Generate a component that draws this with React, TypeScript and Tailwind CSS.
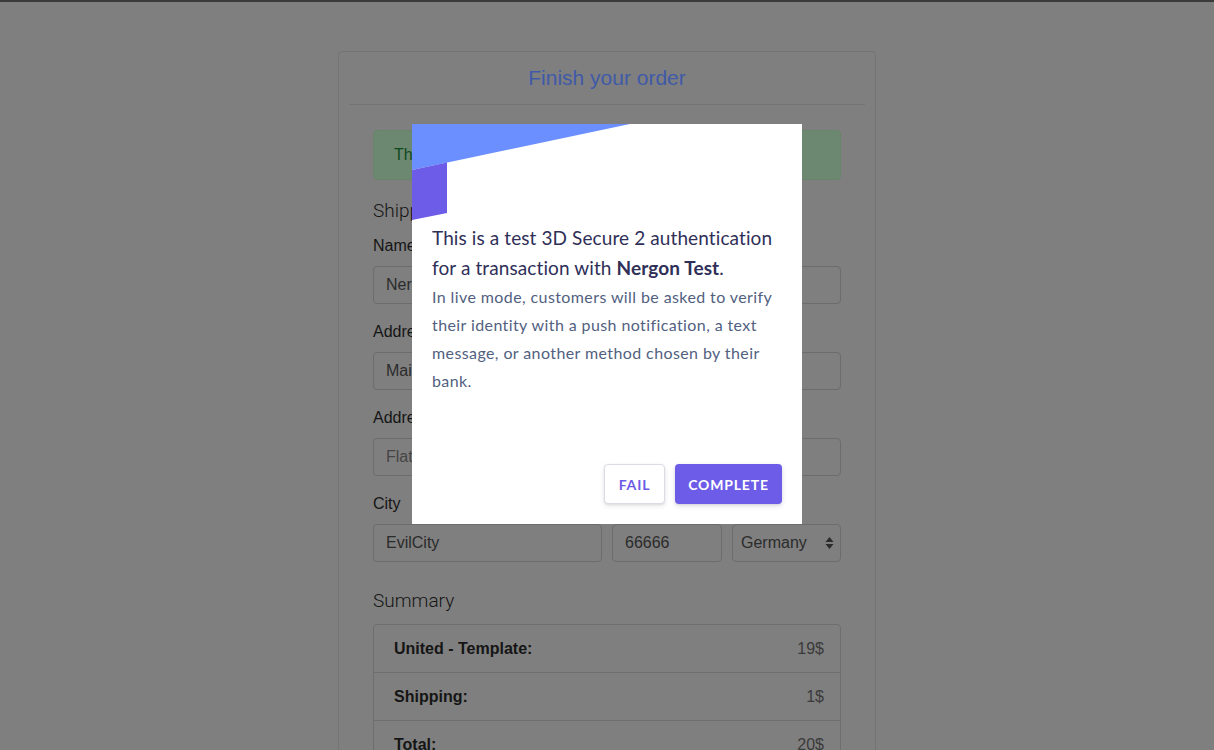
import React from "react";

const summary = [
  { label: "United - Template:", value: "19$" },
  { label: "Shipping:", value: "1$" },
  { label: "Total:", value: "20$" },
];

function Field({ label, value, placeholder }: { label: string; value?: string; placeholder?: string }) {
  return (
    <div className="mb-4">
      <label className="mb-2 block text-[16px] leading-6 text-[#151515]">{label}</label>
      <input
        readOnly
        defaultValue={value}
        placeholder={placeholder}
        className="h-[38px] w-full rounded-[4px] border border-[#6c6c6c] bg-[#7f7f7f] px-3 text-[16px] text-[#2b2b2b] outline-none placeholder:text-[#454545]"
      />
    </div>
  );
}

function ThreeDSModal() {
  return (
    <div className="absolute left-1/2 top-[124px] h-[400px] w-[390px] -translate-x-1/2 bg-white" style={{ fontFamily: "Lato, 'Open Sans', sans-serif" }}>
      {/* corner shapes */}
      <svg className="absolute left-0 top-0" width="218" height="96" viewBox="0 0 218 96">
        <polygon points="0,0 218,0 0,46" fill="#6b8fff" />
        <polygon points="0,46 35,38.6 35,89 0,96" fill="#6c5ce7" />
      </svg>

      <div className="flex h-full flex-col px-5 pt-[99px] pb-5">
        <p className="text-[19px] leading-[30px] tracking-[0.1px] text-[#2f2f58]">
          This is a test 3D Secure 2 authentication for a transaction with <b>Nergon Test</b>.
        </p>
        <p className="text-[16px] leading-[28px] tracking-[0.4px] text-[#525f7f]">
          In live mode, customers will be asked to verify their identity with a push notification, a text message, or another method chosen by their bank.
        </p>

        <div className="mt-auto flex justify-end gap-[10px]">
          <button className="h-10 w-[61px] rounded-[4px] border border-[#dcdce4] bg-white text-[14px] font-bold tracking-[0.06em] text-[#6c5ce7] shadow-[0_2px_5px_rgba(50,50,93,0.1),0_1px_2px_rgba(0,0,0,0.08)]">
            FAIL
          </button>
          <button className="h-10 w-[107px] rounded-[4px] bg-[#6c5ce7] text-[14px] font-bold tracking-[0.06em] text-white shadow-[0_2px_5px_rgba(50,50,93,0.15),0_1px_2px_rgba(0,0,0,0.08)]">
            COMPLETE
          </button>
        </div>
      </div>
    </div>
  );
}

export default function App() {
  return (
    <div className="relative h-[750px] overflow-hidden bg-[#7f7f7f]" style={{ fontFamily: "'Liberation Sans', Arial, sans-serif" }}>
      <div className="h-[2px] bg-[#3a3a3a]" />

      {/* Order card */}
      <div className="mx-auto mt-[49px] w-[538px] rounded-[4px] border border-[#747474]">
        <div className="mx-[10px] flex h-[53px] items-center justify-center border-b border-[#747474]">
          <h1 className="text-[21px] text-[#3f5aa8]">Finish your order</h1>
        </div>

        <div className="px-[34px] pt-[25px] pb-10">
          <div className="flex h-[50px] items-center rounded-[4px] border border-[#688569] bg-[#6d8870] px-5 text-[16px] text-[#0f4a1f]">
            Thank you for your order.
          </div>

          <h2 className="mt-[19px] mb-[11px] h-6 text-[19px] font-light leading-6 text-[#151515]" style={{ fontFamily: "Roboto, sans-serif" }}>
            Shipping
          </h2>

          <Field label="Name" value="Nergon Test" />
          <Field label="Address" value="Main Street 1" />
          <Field label="Address 2" placeholder="Flat, suite, etc." />

          <label className="mb-2 block text-[16px] leading-6 text-[#151515]">City</label>
          <div className="flex gap-[10px]">
            <input
              readOnly
              defaultValue="EvilCity"
              className="h-[38px] w-[229px] rounded-[4px] border border-[#6c6c6c] bg-[#7f7f7f] px-3 text-[16px] text-[#2b2b2b] outline-none"
            />
            <input
              readOnly
              defaultValue="66666"
              className="h-[38px] w-[110px] rounded-[4px] border border-[#6c6c6c] bg-[#7f7f7f] px-3 text-[16px] text-[#2b2b2b] outline-none"
            />
            <div className="flex h-[38px] w-[110px] items-center justify-between rounded-[4px] border border-[#6c6c6c] pl-2 pr-[6px] text-[16px] text-[#2b2b2b]">
              <span>Germany</span>
              <svg width="9" height="14" viewBox="0 0 9 14">
                <polygon points="4.5,1 8.5,6 0.5,6" fill="#2b2b2b" />
                <polygon points="0.5,8 8.5,8 4.5,13" fill="#2b2b2b" />
              </svg>
            </div>
          </div>

          <h2 className="mt-[27px] mb-[11px] h-6 text-[19px] font-light leading-6 text-[#151515]" style={{ fontFamily: "Roboto, sans-serif" }}>
            Summary
          </h2>

          <div className="divide-y divide-[#6e6e6e] rounded-[4px] border border-[#6e6e6e]">
            {summary.map((row) => (
              <div key={row.label} className="flex h-12 items-center justify-between pl-5 pr-4 text-[16px]">
                <span className="font-bold text-[#151515]">{row.label}</span>
                <span className="text-[#3a3a3a]">{row.value}</span>
              </div>
            ))}
          </div>
        </div>
      </div>

      <ThreeDSModal />
    </div>
  );
}
